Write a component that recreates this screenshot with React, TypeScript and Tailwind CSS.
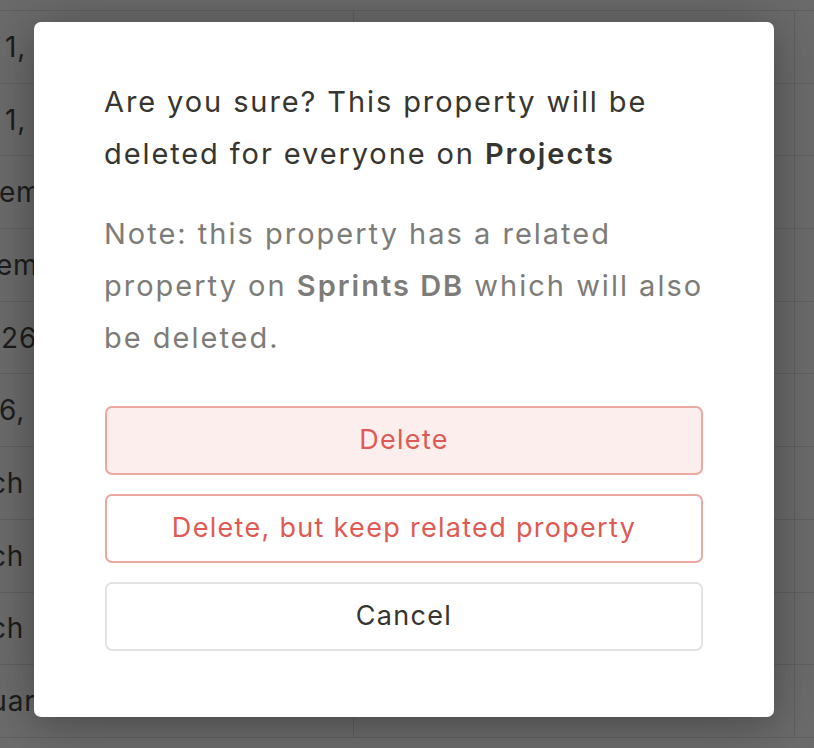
const rows = [
  { text: "1, 2022", indent: "ml-[5px]" },
  { text: "1, 2022", indent: "ml-[5px]" },
  { text: "ember 2, 2021", indent: "ml-[-1px]" },
  { text: "ember 9, 2021", indent: "ml-[-4px]" },
  { text: "26, 2022", indent: "ml-[1px]" },
  { text: "6, 2022", indent: "ml-[-1px]" },
  { text: "rch 2, 2022", indent: "ml-[-21px]" },
  { text: "rch 2, 2022", indent: "ml-[-21px]" },
  { text: "rch 2, 2022", indent: "ml-[-21px]" },
  { text: "nuary 4, 2022", indent: "ml-[-27px]" },
];

const Background = () => {
  return (
    <div className="h-[748px] w-[814px] overflow-hidden bg-[#6b6b6b] pt-[10px]">
      <div className="border-t border-[#5f5f5f]">
        {rows.map((row, i) => (
          <div key={i} className="flex h-[72.7px] border-b border-[#5f5f5f]">
            <div className="flex w-[354px] items-center overflow-hidden border-r border-[#5f5f5f]">
              <span className={`${row.indent} whitespace-nowrap text-[28px] tracking-[0.8px] text-[#1d1d1d]`}>
                {row.text}
              </span>
            </div>
            <div className="w-[441px] border-r border-[#5f5f5f]" />
            <div className="flex-1" />
          </div>
        ))}
      </div>
    </div>
  );
};

const Modal = () => {
  return (
    <div className="absolute left-[34px] top-[22px] flex h-[695px] w-[740px] flex-col rounded-[7px] bg-white px-[70px] pb-[66px] pt-[54px] shadow-[0_0_60px_rgba(0,0,0,0.22),0_10px_30px_rgba(0,0,0,0.15)]">
      <p className="text-[29px] leading-[52px] tracking-[1.9px] text-[#37352f]">
        Are you sure? This property will be deleted for everyone on{" "}
        <span className="font-semibold">Projects</span>
      </p>
      <p className="mt-[28px] text-[29px] leading-[52px] tracking-[2px] text-[#7d7c78]">
        Note: this property has a related property on{" "}
        <span className="font-semibold">Sprints DB</span> which will also be deleted.
      </p>
      <div className="mt-[42px] flex flex-col gap-[19px] px-px">
        <button className="h-[69px] rounded-[7px] border-2 border-[#eca9a4] bg-[#fbeeed] text-[27px] tracking-[1.3px] text-[#e05a53]">
          Delete
        </button>
        <button className="h-[69px] rounded-[7px] border-2 border-[#eca9a4] bg-white text-[27px] tracking-[1.3px] text-[#e05a53]">
          Delete, but keep related property
        </button>
        <button className="h-[69px] rounded-[7px] border-2 border-[#e3e3e2] bg-white text-[27px] tracking-[1.3px] text-[#37352f]">
          Cancel
        </button>
      </div>
    </div>
  );
};

export default function App() {
  return (
    <div className="relative h-[748px] w-[814px] overflow-hidden font-['Inter',sans-serif]">
      <Background />
      <Modal />
    </div>
  );
}
